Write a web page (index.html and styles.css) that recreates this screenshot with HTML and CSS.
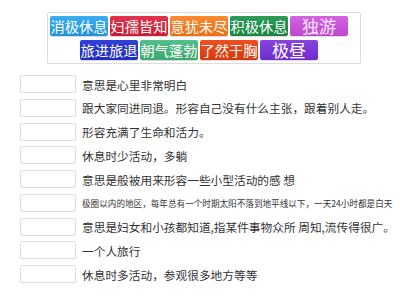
FILE: index.html
```html
<!DOCTYPE html>
<html lang="zh">
<head>
  <meta charset="UTF-8">
  <title>配对游戏</title>
  <link rel="stylesheet" href="styles.css">
</head>
<body>

<div class="bank">
  <span class="tile blue">消极休息</span>
  <span class="tile red">妇孺皆知</span>
  <span class="tile orange">意犹未尽</span>
  <span class="tile green">积极休息</span>
  <span class="tile pink big">独游</span>
  <span class="tile navy">旅进旅退</span>
  <span class="tile mint">朝气蓬勃</span>
  <span class="tile flame">了然于胸</span>
  <span class="tile violet big">极昼</span>
</div>

<ul class="pairs">
  <li><span class="slot"></span><span class="clue">意思是心里非常明白</span></li>
  <li><span class="slot"></span><span class="clue">跟大家同进同退。形容自己没有什么主张，跟着别人走。</span></li>
  <li><span class="slot"></span><span class="clue">形容充满了生命和活力。</span></li>
  <li><span class="slot"></span><span class="clue">休息时少活动，多躺</span></li>
  <li><span class="slot"></span><span class="clue">意思是般被用来形容一些小型活动的感 想</span></li>
  <li><span class="slot"></span><span class="clue small">极圈以内的地区，每年总有一个时期太阳不落到地平线以下，一天24小时都是白天</span></li>
  <li><span class="slot"></span><span class="clue">意思是妇女和小孩都知道,指某件事物众所 周知,流传得很广。</span></li>
  <li><span class="slot"></span><span class="clue">一个人旅行</span></li>
  <li><span class="slot"></span><span class="clue">休息时多活动，参观很多地方等等</span></li>
</ul>

</body>
</html>
```

FILE: styles.css
```css
body {
  margin: 0;
  background-color: white;
  font-family: "Noto Sans CJK SC", "Noto Sans", sans-serif;
}
.bank {
  box-sizing: border-box;
  width: 314px;
  margin: 12px 0 0 47px;
  padding: 3px 11px 3px 1px;
  border: 1px solid #dcdcdc;
  border-radius: 2px;
  display: flex;
  flex-wrap: wrap;
  justify-content: center;
  gap: 4px 2px;
}
.tile {
  width: 58px;
  height: 20px;
  line-height: 20px;
  text-align: center;
  font-size: 14.2px;
  color: white;
  border-radius: 2px;
  box-shadow: 0 1px 1px rgba(0,0,0,0.15);
}
.tile.big {
  font-size: 17px;
}
.blue { background: linear-gradient(#3aaef0, #2393d8); }
.red { background: linear-gradient(#e0344e, #c91a35); }
.orange { background: linear-gradient(#fb8a30, #ec7014); }
.green { background: linear-gradient(#2c9d58, #1a8342); }
.pink { background: linear-gradient(#d264e0, #bf48d0); color: #fbe8ff; }
.navy { background: linear-gradient(#3040d8, #1e2cc0); }
.mint { background: linear-gradient(#52c088, #3aa86e); }
.flame { background: linear-gradient(#ee5020, #d9380a); }
.violet { background: linear-gradient(#8844e0, #6e2ccc); }

.pairs {
  list-style: none;
  margin: 11px 0 0;
  padding: 0 0 0 20px;
  display: flex;
  flex-direction: column;
  gap: 5.75px;
}
.pairs li {
  display: flex;
  align-items: center;
  gap: 6px;
  height: 18px;
}
.slot {
  box-sizing: border-box;
  flex: none;
  width: 56px;
  height: 18px;
  border: 1px solid #dedede;
  border-radius: 2px;
  background-color: white;
}
.clue {
  font-size: 11.7px;
  color: #333;
  white-space: nowrap;
}
.clue.small {
  font-size: 8.6px;
}
```
